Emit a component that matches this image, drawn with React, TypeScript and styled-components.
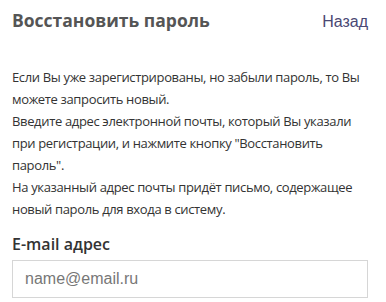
import styled, { createGlobalStyle } from "styled-components";

const GlobalStyle = createGlobalStyle`
  html, body {
    margin: 0;
    padding: 0;
    background: #fff;
  }
`;

function App() {
  return <Container>
    <GlobalStyle />
    <Header>
      <Title>Восстановить пароль</Title>
      <BackLink href="#">Назад</BackLink>
    </Header>
    <Info>
      <p>Если Вы уже зарегистрированы, но забыли пароль, то Вы<br />можете запросить новый.</p>
      <p>Введите адрес электронной почты, который Вы указали<br />при регистрации, и нажмите кнопку "Восстановить<br />пароль".</p>
      <p>На указанный адрес почты придёт письмо, содержащее<br />новый пароль для входа в систему.</p>
    </Info>
    <Field>
      <Label htmlFor="email">E-mail адрес</Label>
      <Input id="email" type="email" placeholder="name@email.ru" />
    </Field>
  </Container>
}

export default App;

const Container = styled.div`
  display: flex;
  flex-direction: column;
  padding: 0 18px 0 12px;
  width: 386px;
  box-sizing: border-box;
`

const Header = styled.div`
  display: flex;
  justify-content: space-between;
  align-items: baseline;
  padding-top: 7px;
`

const Title = styled.h1`
  margin: 0;
  font-family: "Open Sans", sans-serif;
  font-weight: 700;
  font-size: 17.5px;
  line-height: 26px;
  color: #555;
`

const BackLink = styled.a`
  font-family: "Liberation Sans", Arial, sans-serif;
  font-size: 16px;
  color: #4a4874;
  text-decoration: none;
`

const Info = styled.div`
  margin-top: 33px;
  font-family: "Open Sans", sans-serif;
  font-size: 13px;
  line-height: 22px;
  color: #333;
  white-space: nowrap;
  letter-spacing: -0.35px;

  p {
    margin: 0;
  }
`

const Field = styled.div`
  display: flex;
  flex-direction: column;
  margin-top: 14px;
`

const Label = styled.label`
  font-family: "Open Sans", sans-serif;
  font-weight: 600;
  font-size: 16px;
  line-height: 20px;
  color: #333;
  margin-bottom: 6px;
`

const Input = styled.input`
  height: 38px;
  box-sizing: border-box;
  border: 1px solid #d6d6d6;
  border-radius: 0;
  padding: 0 12px;
  font-family: "Liberation Sans", Arial, sans-serif;
  font-size: 16px;
  color: #333;
  outline: none;

  &::placeholder {
    color: #777;
  }
`
